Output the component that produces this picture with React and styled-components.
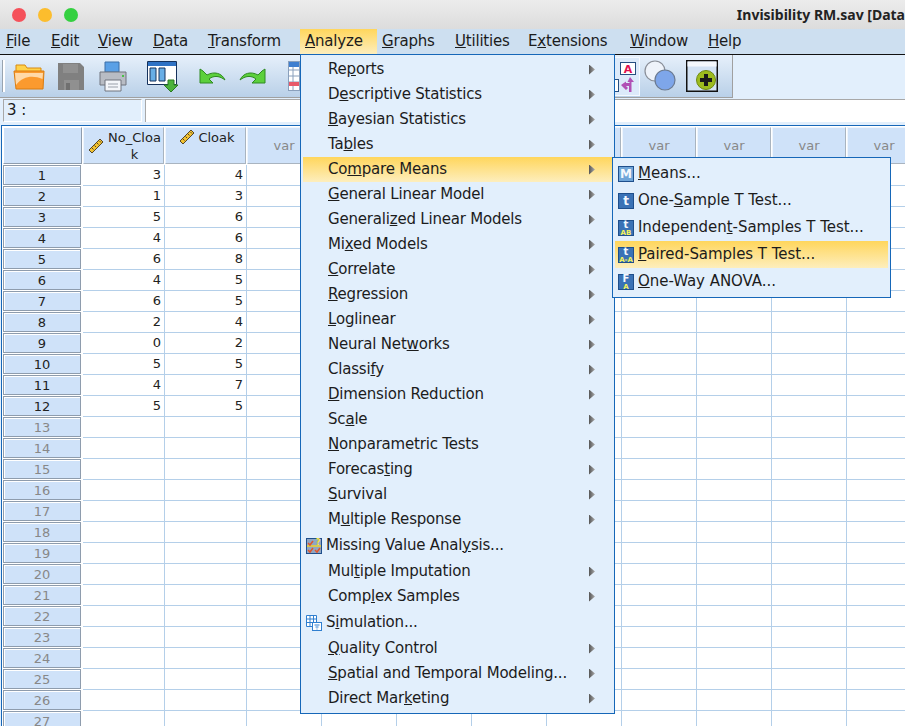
import React from "react";
import styled, { createGlobalStyle } from "styled-components";

const GlobalStyle = createGlobalStyle`
  html, body {
    margin: 0;
    padding: 0;
    background: #e2effc;
  }
  body {
    font-family: "DejaVu Sans", "Liberation Sans", sans-serif;
    font-size: 15px;
    color: #1c1c1c;
  }
`;

const Window = styled.div`
  position: relative;
  width: 905px;
  height: 726px;
  overflow: hidden;
  background: #e2effc;
`;

const TitleBar = styled.div`
  height: 29px;
  display: flex;
  align-items: center;
  padding-left: 12px;
  background: linear-gradient(#ececec, #dcdcdc);
  box-sizing: border-box;
`;

const Light = styled.span`
  width: 14px;
  height: 14px;
  border-radius: 50%;
  margin-right: 12px;
  background: ${(p) => p.$color};
`;

const Title = styled.div`
  margin-left: auto;
  flex: none;
  white-space: nowrap;
  font-family: "Noto Sans", "DejaVu Sans", sans-serif;
  font-size: 14px;
  font-weight: 700;
  color: #222;
`;

const MenuBar = styled.div`
  height: 25px;
  display: flex;
  padding-left: 1px;
  background: #cddff0;
  border-bottom: 1px solid #111;
`;

const MenuLabel = styled.div`
  width: ${(p) => p.$w}px;
  padding-left: 5px;
  box-sizing: border-box;
  line-height: 24px;
  letter-spacing: -0.2px;
  white-space: nowrap;
  background: ${(p) =>
    p.$open ? "linear-gradient(#ffd65c, #fdeebd)" : "transparent"};
`;

const Toolbar = styled.div`
  width: 733px;
  height: 43px;
  display: flex;
  align-items: center;
  box-sizing: border-box;
  border-right: 1px solid #a0a0a0;
  border-bottom: 1px solid #a0a0a0;
  background: linear-gradient(#e6f0fb, #b9d0e8);
  padding-left: 2px;
`;

const Grip = styled.span`
  width: 2px;
  height: 32px;
  margin-right: 8px;
  background: #fff;
  border-left: 1px solid #98a4b0;
`;

const Tool = styled.svg`
  flex: none;
  display: block;
  margin-left: ${(p) => p.$gap || 0}px;
  margin-right: ${(p) => p.$after || 0}px;
  ${(p) => p.$push && "margin-left: auto;"}
`;

const CellBar = styled.div`
  height: 27px;
  display: flex;
  gap: 3px;
  padding: 1px 0 3px 3px;
  box-sizing: border-box;
  background: #e2effc;
`;

const CellName = styled.div`
  width: 139px;
  box-sizing: border-box;
  border-top: 1px solid #a8a8a8;
  border-left: 1px solid #a8a8a8;
  border-right: 1px solid #fff;
  border-bottom: 1px solid #fff;
  padding-left: 3px;
  line-height: 21px;
`;

const CellValue = styled.div`
  flex: 1;
  background: #fff;
  border-left: 1px solid #a8a8a8;
  border-top: 1px solid #a8a8a8;
`;

const Sheet = styled.div`
  border: 1px solid #1667b8;
  border-right: none;
  border-bottom: none;
  margin: 0 0 0 1px;
  padding: 1px 0 0 1px;
  background: #fff;
  display: grid;
  grid-template-columns: 80px 82px 82px repeat(9, 75px);
  grid-template-rows: 38px;
  grid-auto-rows: 21px;
  height: 600px;
  overflow: hidden;
`;

const Corner = styled.div`
  width: 79px;
  height: 37px;
  box-sizing: border-box;
  background: #cfe2f9;
  border: 1px solid #8e9cad;
  border-left-color: #fff;
  border-top-color: #fff;
`;

const HeadCell = styled.div`
  height: 37px;
  box-sizing: border-box;
  margin-right: 1px;
  background: #cfe2f9;
  border: 1px solid #a9b4c0;
  border-left-color: #eef5fd;
  border-top-color: #eef5fd;
  display: flex;
  align-items: ${(p) => (p.$var ? "center" : "flex-start")};
  justify-content: center;
  text-align: center;
  font-size: 13px;
  line-height: 17px;
  color: ${(p) => (p.$var ? "#888" : "#222")};
  padding-top: ${(p) => (p.$var ? 0 : 1)}px;
  position: relative;
`;

const HeadName = styled.span`
  display: block;
  width: ${(p) => p.$w}px;
  margin-left: ${(p) => p.$left}px;
  word-break: break-all;
`;

const Ruler = styled.svg`
  position: absolute;
  left: ${(p) => p.$left}px;
  top: ${(p) => p.$top}px;
`;

const RowHead = styled.div`
  width: 78px;
  height: 20px;
  box-sizing: border-box;
  background: #cfe2f9;
  border: 1px solid #8e9cad;
  box-shadow: inset 1px 1px 0 #fff;
  text-align: center;
  font-size: 13px;
  line-height: 19px;
  color: ${(p) => (p.$used ? "#222" : "#888")};
`;

const Cell = styled.div`
  box-sizing: border-box;
  border-right: 1px solid #b4cfe9;
  border-bottom: 1px solid #b4cfe9;
  text-align: right;
  padding-right: 3px;
  font-size: 13px;
  line-height: 20px;
  color: #222;
`;

const Menu = styled.div`
  position: absolute;
  left: 300px;
  top: 54px;
  width: 315px;
  height: 660px;
  box-sizing: border-box;
  background: #e2effc;
  border: 1px solid #1667b8;
  padding: 2px;
`;

const SubMenu = styled.div`
  position: absolute;
  left: 612px;
  top: 157px;
  width: 279px;
  height: 141px;
  box-sizing: border-box;
  background: #e2effc;
  border: 1px solid #1667b8;
  padding: 2px 2px 0;
`;

const Item = styled.div`
  height: ${(p) => p.$h}px;
  display: flex;
  align-items: center;
  padding-left: ${(p) => p.$pad}px;
  white-space: nowrap;
  background: ${(p) =>
    p.$active ? "linear-gradient(#ffd65c, #fdeebd)" : "transparent"};
`;

const ItemText = styled.span`
  padding-bottom: 2px;
  letter-spacing: ${(p) => p.$track}px;
`;

const ItemIcon = styled.svg`
  flex: none;
  margin-right: ${(p) => p.$space}px;
`;

const Arrow = styled.span`
  margin-left: auto;
  margin-right: 17px;
  width: 6px;
  height: 10px;
  background: linear-gradient(90deg, #555, #aaa);
  clip-path: polygon(0 0, 100% 50%, 0 100%);
`;

const menus = [
  [<u>F</u>, "ile", 45],
  [<u>E</u>, "dit", 47],
  [<u>V</u>, "iew", 55],
  [<u>D</u>, "ata", 55],
  [<u>T</u>, "ransform", 97],
];

const menusRight = [
  [<u>G</u>, "raphs", 73],
  [<u>U</u>, "tilities", 73],
  ["E", <u>x</u>, "tensions", 102],
  [<u>W</u>, "indow", 78],
  [<u>H</u>, "elp", 60],
];

const items = [
  ["Re", "p", "orts"],
  ["D", "e", "scriptive Statistics"],
  ["", "B", "ayesian Statistics"],
  ["Ta", "b", "les"],
  ["Co", "m", "pare Means", "active"],
  ["", "G", "eneral Linear Model"],
  ["Generali", "z", "ed Linear Models"],
  ["Mi", "x", "ed Models"],
  ["", "C", "orrelate"],
  ["", "R", "egression"],
  ["", "L", "oglinear"],
  ["Neural Net", "w", "orks"],
  ["Classi", "f", "y"],
  ["", "D", "imension Reduction"],
  ["Sc", "a", "le"],
  ["", "N", "onparametric Tests"],
  ["Forecas", "t", "ing"],
  ["", "S", "urvival"],
  ["M", "u", "ltiple Response"],
  ["Missing Value Anal", "y", "sis...", "missing"],
  ["Mul", "t", "iple Imputation"],
  ["Comp", "l", "ex Samples"],
  ["S", "i", "mulation...", "sim"],
  ["", "Q", "uality Control"],
  ["", "S", "patial and Temporal Modeling..."],
  ["Direct Mar", "k", "eting"],
];

const subItems = [
  ["", "M", "eans...", "M", ""],
  ["One-", "S", "ample T Test...", "t", ""],
  ["Independen", "t", "-Samples T Test...", "t", "AB"],
  ["", "P", "aired-Samples T Test...", "t", "A-A"],
  ["", "O", "ne-Way ANOVA...", "F", "A"],
];

const rows = [
  [3, 4], [1, 3], [5, 6], [4, 6], [6, 8], [4, 5],
  [6, 5], [2, 4], [0, 2], [5, 5], [4, 7], [5, 5],
];

const BlueIcon = ({ main, sub }) => (
  <ItemIcon width="16" height="16" viewBox="0 0 16 16" $space={4}>
    <rect x="0.5" y="0.5" width="15" height="15" fill={main === "M" ? "#6fa5d8" : "#3a72b6"} stroke="#1f4f8c" />
    <text x="8" y={sub ? 8 : 12} textAnchor="middle" fontSize={sub ? 10 : 12} fontWeight="700" fontFamily="DejaVu Sans" fill="#f4f8fd">{main}</text>
    {sub && (
      <text x="8" y="14.5" textAnchor="middle" fontSize="7" fontWeight="700" fontFamily="DejaVu Sans" fill="#f6f25a">{sub}</text>
    )}
  </ItemIcon>
);

const MissingIcon = () => (
  <ItemIcon width="16" height="16" viewBox="0 0 16 16" $space={4}>
    <rect x="0.5" y="0.5" width="15" height="15" fill="#8fa6c4" stroke="#1f4f8c" />
    <rect x="1" y="7" width="14" height="2" fill="#d8c850" />
    <path d="M2 5l2 2 3-4M2 12l2 2 3-4M9 12l2 2 3-4" fill="none" stroke="#e0562a" strokeWidth="1.5" />
    <text x="12" y="7" textAnchor="middle" fontSize="8" fontWeight="700" fontFamily="DejaVu Sans" fill="#f6e23a">?</text>
  </ItemIcon>
);

const SimIcon = () => (
  <ItemIcon width="16" height="16" viewBox="0 0 16 16" $space={4}>
    <path d="M0.5 0.5h10v11h-10zM0.5 4h10M0.5 7.5h10M4 0.5v11M7.5 0.5v11" fill="#fff" stroke="#2f7fd0" />
    <rect x="6.5" y="7.5" width="9" height="8" fill="#fff" stroke="#2f7fd0" />
    <path d="M8.5 10h5M9.5 12h3M10.5 14h1" stroke="#2f7fd0" />
  </ItemIcon>
);

const RulerIcon = (props) => (
  <Ruler width="16" height="16" viewBox="0 0 16 16" {...props}>
    <path d="M1 12L12 1l3 3L4 15z" fill="#f2c230" stroke="#54462a" />
    <path d="M4 10l1.5 1.5M6.5 7.5L8 9M9 5l1.5 1.5M11.5 3L13 4.5" stroke="#54462a" />
  </Ruler>
);

const App = () => (
  <Window>
    <GlobalStyle />
    <TitleBar>
      <Light $color="#f5515a" />
      <Light $color="#fcbd2d" />
      <Light $color="#34d040" />
      <Title>Invisibility RM.sav [Data</Title>
    </TitleBar>

    <MenuBar>
      {menus.map((m, i) => (
        <MenuLabel key={i} $w={m[m.length - 1]}>{m.slice(0, -1)}</MenuLabel>
      ))}
      <MenuLabel $w={77} $open><u>A</u>nalyze</MenuLabel>
      {menusRight.map((m, i) => (
        <MenuLabel key={i} $w={m[m.length - 1]}>{m.slice(0, -1)}</MenuLabel>
      ))}
    </MenuBar>

    <Toolbar>
      <Grip />
      <Tool width="32" height="30" viewBox="0 0 32 30">
        <path d="M3 7V4h9l2 3h14v6H3z" fill="#ffd24a" stroke="#d98a10" />
        <path d="M1 10h30l-1 18H3z" fill="#fb9a2e" stroke="#d97c10" />
        <path d="M2 12h28l-.5 6C20 14 10 15 3 24z" fill="#ffd9a8" />
      </Tool>
      <Tool $gap={13} width="26" height="27" viewBox="0 0 26 27">
        <path d="M0 0h22l4 4v23H0z" fill="#808080" />
        <path d="M5 1h15v9H5zM6 17h15v10H6z" fill="#909090" />
        <rect x="8" y="20" width="4" height="7" fill="#707070" />
      </Tool>
      <Tool $gap={15} width="28" height="31" viewBox="0 0 28 31">
        <path d="M6 1h14v10H6z" fill="#5aa0e6" stroke="#3a6ea8" />
        <path d="M1 11h26v13H1z" fill="#b8bcc4" stroke="#70757e" />
        <path d="M6 19h16v11H6z" fill="#f4f6fa" stroke="#70757e" />
        <path d="M9 23h10M9 26h10" stroke="#9aa0aa" />
        <rect x="23" y="14" width="2" height="2" fill="#4ac04a" />
      </Tool>
      <Tool $gap={20} width="31" height="31" viewBox="0 0 31 31">
        <path d="M0.5 0.5h29v23h-29z" fill="#fff" stroke="#16325c" />
        <rect x="1" y="1" width="28" height="4" fill="#2f72c4" />
        <path d="M3 7h6v13H3zM12 7h6v13h-6z" fill="#68aee6" stroke="#16325c" />
        <path d="M21 19h6v5h4l-7 7-7-7h4z" fill="#4cb33c" stroke="#2a7a22" />
      </Tool>
      <Tool $gap={21} width="27" height="16" viewBox="0 0 27 16">
        <path d="M1 1v14h13l-4-4c5-4 11-3 16 1-3-7-11-9-18-5L4 3z" fill="#5cd03c" stroke="#2f8a22" />
      </Tool>
      <Tool $gap={13} width="27" height="16" viewBox="0 0 27 16">
        <path d="M26 1v14H13l4-4C12 7 6 8 1 12c3-7 11-9 18-5l4-4z" fill="#5cd03c" stroke="#2f8a22" />
      </Tool>
      <Tool $gap={22} width="12" height="30" viewBox="0 0 12 30">
        <rect x="0.5" y="0.5" width="11" height="29" fill="#fff" stroke="#8aa0bc" />
        <path d="M0.5 9h11M0.5 15h11M0.500 21h11M5 6v23" stroke="#8aa0bc" />
        <rect x="1" y="1" width="10" height="5" fill="#3f7fd0" />
        <rect x="1" y="21" width="10" height="4" fill="#e85a6a" />
      </Tool>
      <Tool $push width="29" height="39" viewBox="0 0 29 39">
        <rect x="0.5" y="0.5" width="28" height="38" fill="#dceafa" stroke="#f4f9ff" />
        <rect x="9.5" y="5.5" width="15" height="12" fill="#fff" stroke="#274f80" />
        <text x="17" y="16" textAnchor="middle" fontSize="11" fontWeight="700" fontFamily="DejaVu Sans" fill="#e0104f">A</text>
        <rect x="1.5" y="22.5" width="6" height="12" fill="#fff" stroke="#274f80" />
        <rect x="1" y="23" width="3" height="11" fill="#e0104f" />
        <path d="M19 20l4 5h-2.500v10h-2.500v-6h-3l2 2-2 2-5-5 5-3.500v1.500h3.500v-1h-2z" fill="#b150b5" />
      </Tool>
      <Tool $gap={4} width="33" height="32" viewBox="0 0 33 32">
        <circle cx="11" cy="11" r="10" fill="#eef3fa" stroke="#8a8f98" strokeWidth="1.2" />
        <circle cx="21" cy="20" r="10" fill="#7ea6ea" stroke="#6a7a92" strokeWidth="1.2" />
      </Tool>
      <Tool $gap={9} $after={14} width="32" height="32" viewBox="0 0 32 32">
        <rect x="0.75" y="0.75" width="30.5" height="30.5" fill="#d2e2f4" stroke="#111" strokeWidth="1.5" />
        <rect x="1.500" y="1.500" width="29" height="5" fill="#f4f8fd" />
        <circle cx="20" cy="20" r="9.500" fill="#9dbb1e" stroke="#6e8a12" />
        <path d="M18 14h4v4h4v4h-4v4h-4v-4h-4v-4h4z" fill="#1a1a1a" />
      </Tool>
    </Toolbar>

    <CellBar>
      <CellName>3 :</CellName>
      <CellValue />
    </CellBar>

    <Sheet>
      <Corner />
      <HeadCell>
        <RulerIcon $left={4} $top={10} />
        <HeadName $w={58} $left={22}>No_Cloak</HeadName>
      </HeadCell>
      <HeadCell>
        <RulerIcon $left={13} $top={1} />
        <HeadName $w={50} $left={22}>Cloak</HeadName>
      </HeadCell>
      {Array.from({ length: 9 }, (_, i) => (
        <HeadCell key={i} $var>var</HeadCell>
      ))}
      {Array.from({ length: 27 }, (_, r) => (
        <React.Fragment key={r}>
          <RowHead $used={r < 12}>{r + 1}</RowHead>
          {Array.from({ length: 11 }, (_, c) => (
            <Cell key={c}>{c < 2 && r < 12 ? rows[r][c] : ""}</Cell>
          ))}
        </React.Fragment>
      ))}
    </Sheet>

    <Menu>
      {items.map(([before, key, after, kind], i) => (
        <Item
          key={i}
          $h={kind === "missing" || kind === "sim" ? 27 : 25}
          $pad={kind === "missing" || kind === "sim" ? 3 : 25}
          $active={kind === "active"}
        >
          {kind === "missing" && <MissingIcon />}
          {kind === "sim" && <SimIcon />}
          <ItemText $track={-0.2}>{before}<u>{key}</u>{after}</ItemText>
          {kind !== "missing" && kind !== "sim" && <Arrow />}
        </Item>
      ))}
    </Menu>

    <SubMenu>
      {subItems.map(([before, key, after, main, sub], i) => (
        <Item key={i} $h={27} $pad={3} $active={i === 3}>
          <BlueIcon main={main} sub={sub} />
          <ItemText $track={-0.05}>{before}<u>{key}</u>{after}</ItemText>
        </Item>
      ))}
    </SubMenu>
  </Window>
);

export default App;
